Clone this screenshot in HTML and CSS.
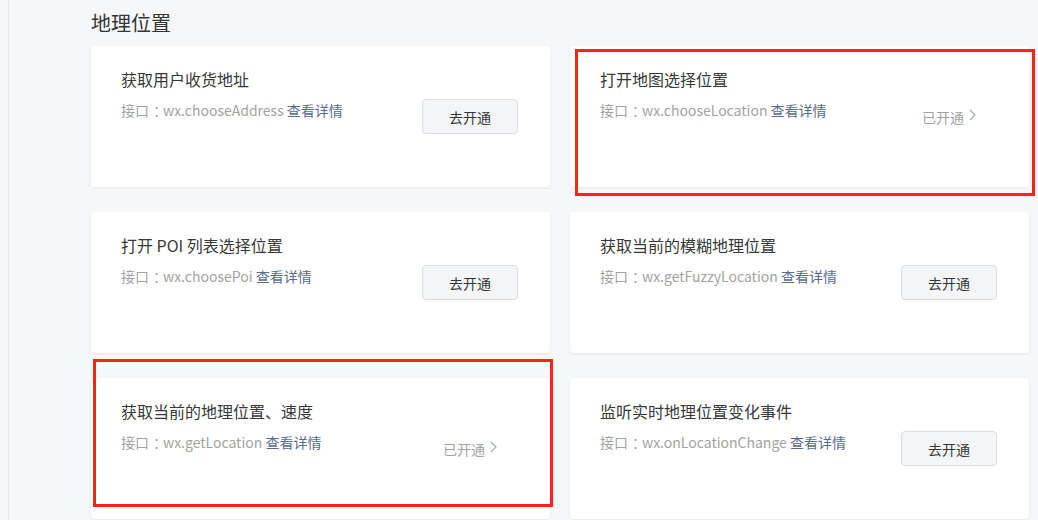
FILE: index.html
```html
<!DOCTYPE html>
<html lang="zh-CN">
<head>
<meta charset="utf-8">
<title>地理位置</title>
<link rel="stylesheet" href="styles.css">
</head>
<body>
<div class="layout">
  <div class="side"></div>
  <main class="main">
    <h2 class="section-title">地理位置</h2>
    <div class="grid">
      <div class="card">
        <div class="info">
          <div class="name">获取用户收货地址</div>
          <div class="api">接口<span class="colon">：</span>wx.chooseAddress <a class="link" href="#">查看详情</a></div>
        </div>
        <div class="action"><button class="btn">去开通</button></div>
      </div>
      <div class="card">
        <div class="info">
          <div class="name">打开地图选择位置</div>
          <div class="api">接口<span class="colon">：</span>wx.chooseLocation <a class="link" href="#">查看详情</a></div>
        </div>
        <div class="action"><span class="status">已开通<svg class="chev" width="7" height="12" viewBox="0 0 7 12"><polyline points="1,1 6,6 1,11" fill="none" stroke="#a6a6a6" stroke-width="1.1"/></svg></span></div>
      </div>
      <div class="card">
        <div class="info">
          <div class="name">打开 POI 列表选择位置</div>
          <div class="api">接口<span class="colon">：</span>wx.choosePoi <a class="link" href="#">查看详情</a></div>
        </div>
        <div class="action"><button class="btn">去开通</button></div>
      </div>
      <div class="card">
        <div class="info">
          <div class="name">获取当前的模糊地理位置</div>
          <div class="api">接口<span class="colon">：</span>wx.getFuzzyLocation <a class="link" href="#">查看详情</a></div>
        </div>
        <div class="action"><button class="btn">去开通</button></div>
      </div>
      <div class="card">
        <div class="info">
          <div class="name">获取当前的地理位置、速度</div>
          <div class="api">接口<span class="colon">：</span>wx.getLocation <a class="link" href="#">查看详情</a></div>
        </div>
        <div class="action"><span class="status">已开通<svg class="chev" width="7" height="12" viewBox="0 0 7 12"><polyline points="1,1 6,6 1,11" fill="none" stroke="#a6a6a6" stroke-width="1.1"/></svg></span></div>
      </div>
      <div class="card">
        <div class="info">
          <div class="name">监听实时地理位置变化事件</div>
          <div class="api">接口<span class="colon">：</span>wx.onLocationChange <a class="link" href="#">查看详情</a></div>
        </div>
        <div class="action"><button class="btn">去开通</button></div>
      </div>
    </div>
  </main>
</div>
<div class="mark mark-1"></div>
<div class="mark mark-2"></div>
</body>
</html>
```

FILE: styles.css
```css
html, body {
  margin: 0;
  padding: 0;
  background: #f6f7f9;
  font-family: "Noto Sans CJK SC", "Noto Sans", sans-serif;
  color: #353535;
  overflow: hidden;
}

.layout {
  display: flex;
  min-height: 520px;
}

.side {
  width: 8px;
  flex: none;
  border-right: 1px solid #e6e7ea;
}

.main {
  padding-left: 82px;
  width: 938px;
}

.section-title {
  margin: 9px 0 9px;
  font-size: 20px;
  line-height: 28px;
  font-weight: normal;
  color: #353535;
}

.grid {
  display: grid;
  grid-template-columns: 459px 459px;
  column-gap: 20px;
  row-gap: 25px;
}

.card {
  height: 141px;
  box-sizing: border-box;
  background: #fff;
  border-radius: 4px;
  box-shadow: 0 1px 3px rgba(0, 0, 0, 0.07);
  padding: 21px 32px 0 30px;
  display: flex;
  justify-content: space-between;
}

.info {
  align-self: flex-start;
}

.name {
  font-size: 16px;
  line-height: 24px;
  color: #383838;
}

.api {
  margin-top: 9px;
  font-size: 14px;
  line-height: 20px;
  color: #a3a3a3;
}

.colon {
  display: inline-block;
  padding-left: 4px;
  letter-spacing: -4px;
}

.link {
  color: #576b95;
  text-decoration: none;
}

.action {
  align-self: center;
  margin-top: -21px;
  width: 96px;
  display: flex;
  justify-content: center;
}

.btn {
  width: 96px;
  height: 35px;
  box-sizing: border-box;
  border: 1px solid #dcdee2;
  border-radius: 4px;
  background: #f4f5f7;
  font-family: inherit;
  font-size: 14px;
  color: #353535;
  padding: 0;
}

.status {
  display: inline-flex;
  align-items: center;
  gap: 5px;
  font-size: 14px;
  color: #a3a3a3;
  padding-top: 1px;
}

.chev {
  margin-top: -4px;
}

.mark {
  position: absolute;
  border: 3px solid #fd2317;
  box-sizing: border-box;
}

.mark-1 {
  left: 575px;
  top: 49px;
  width: 460px;
  height: 147px;
}

.mark-2 {
  left: 93px;
  top: 359px;
  width: 460px;
  height: 148px;
}
```
